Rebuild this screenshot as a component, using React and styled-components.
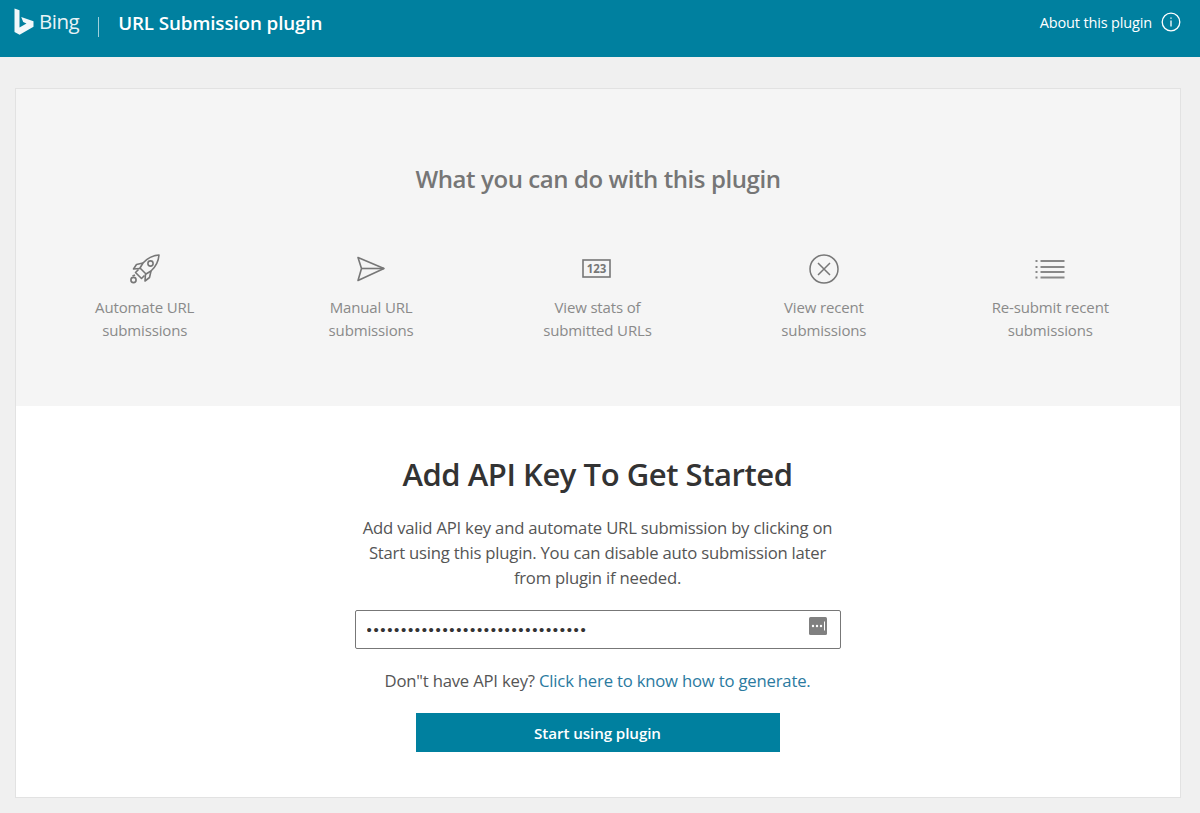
import styled, { createGlobalStyle } from 'styled-components'

const features = [
  { icon: <RocketIcon />, lines: ['Automate URL', 'submissions'] },
  { icon: <SendIcon />, lines: ['Manual URL', 'submissions'] },
  { icon: <StatsIcon />, lines: ['View stats of', 'submitted URLs'] },
  { icon: <CrossIcon />, lines: ['View recent', 'submissions'] },
  { icon: <ListIcon />, lines: ['Re-submit recent', 'submissions'] },
]

export default function App() {
  return (
    <Page>
      <GlobalStyle />
      <Header>
        <Brand>
          <BingLogo />
          <BingWord>Bing</BingWord>
          <Divider />
          <PluginTitle>URL Submission plugin</PluginTitle>
        </Brand>
        <About>
          About this plugin
          <InfoIcon />
        </About>
      </Header>
      <Card>
        <Intro>
          <IntroTitle>What you can do with this plugin</IntroTitle>
          <Features>
            {features.map(f => (
              <Feature key={f.lines[0]}>
                <IconSlot>{f.icon}</IconSlot>
                <FeatureText>
                  {f.lines[0]}
                  <br />
                  {f.lines[1]}
                </FeatureText>
              </Feature>
            ))}
          </Features>
        </Intro>
        <Setup>
          <SetupTitle>Add API Key To Get Started</SetupTitle>
          <SetupText>
            Add valid API key and automate URL submission by clicking on
            <br />
            Start using this plugin. You can disable auto submission later
            <br />
            from plugin if needed.
          </SetupText>
          <KeyField>
            <KeyInput type="password" defaultValue="12345678901234567890123456789012" />
            <KeyBadge>
              <svg width="20" height="18" viewBox="0 0 20 18">
                <rect x="1" y="0" width="18" height="18" rx="1.5" fill="#808080" />
                <circle cx="5" cy="9" r="1.2" fill="#fff" />
                <circle cx="9" cy="9" r="1.2" fill="#fff" />
                <circle cx="13" cy="9" r="1.2" fill="#fff" />
                <rect x="16" y="4.5" width="1" height="9" fill="#fff" />
              </svg>
            </KeyBadge>
          </KeyField>
          <Help>
            Don"t have API key? <HelpLink href="#">Click here to know how to generate.</HelpLink>
          </Help>
          <StartButton>Start using plugin</StartButton>
        </Setup>
      </Card>
    </Page>
  )
}

function BingLogo() {
  return (
    <svg width="20" height="28" viewBox="0 0 20 28">
      <path d="M0.5 0.5 L5.5 2.2 V19.5 L12.5 15.6 L9.2 14 L7.2 9 L19.5 13.3 V18.8 L5.6 26.8 L0.5 24 Z" fill="#f2f8fa" />
    </svg>
  )
}

function InfoIcon() {
  return (
    <svg width="20" height="20" viewBox="0 0 20 20" fill="none" stroke="#fff" strokeWidth="1.3">
      <circle cx="10" cy="10" r="8.8" />
      <path d="M10 8.5 V14.5" />
      <path d="M10 5.5 V6.8" />
    </svg>
  )
}

function RocketIcon() {
  return (
    <svg width="32" height="32" viewBox="0 0 32 32" fill="none" stroke="#777" strokeWidth="1.6" strokeLinejoin="round">
      <path d="M30 2 C 23 2.5 18 5.5 14 10 L 11 15 L 17 21 L 22 18 C 27 13.5 29.5 8.5 30 2 Z" />
      <circle cx="21.5" cy="10.5" r="2.6" />
      <path d="M14 10 L 7.5 11.5 L 4.5 16 L 11 15.5" />
      <path d="M22 18 L 20.5 24.5 L 16 28 L 16.5 21" />
      <path d="M9.5 16.5 L 6.5 19.5 L 12.5 25.5 L 15.5 22.5" />
      <circle cx="4.5" cy="27" r="2.6" />
      <path d="M6 22 L 3.5 23" />
    </svg>
  )
}

function SendIcon() {
  return (
    <svg width="30" height="28" viewBox="0 0 30 28" fill="none" stroke="#777" strokeWidth="1.6" strokeLinejoin="round">
      <path d="M2 2.5 L28 13.5 L2 25.5 L5.5 13.5 Z" />
      <path d="M5.5 13.5 H28" />
    </svg>
  )
}

function StatsIcon() {
  return (
    <svg width="30" height="22" viewBox="0 0 30 22">
      <rect x="1" y="2" width="27" height="17" fill="none" stroke="#777" strokeWidth="1.6" />
      <text x="14.5" y="15" textAnchor="middle" fontFamily="Open Sans, sans-serif" fontWeight="700" fontSize="11.5" fill="#777">123</text>
    </svg>
  )
}

function CrossIcon() {
  return (
    <svg width="30" height="30" viewBox="0 0 30 30" fill="none" stroke="#777" strokeWidth="1.5">
      <circle cx="15" cy="15" r="14" />
      <path d="M9 9 L21 21 M21 9 L9 21" />
    </svg>
  )
}

function ListIcon() {
  return (
    <svg width="30" height="22" viewBox="0 0 30 22" fill="#888">
      <rect x="5.5" y="2" width="24" height="2" />
      <rect x="5.5" y="8" width="24" height="2" />
      <rect x="5.5" y="13" width="24" height="2" />
      <rect x="5.5" y="18.500" width="24" height="2" />
      <rect x="0.500" y="2" width="2" height="2" />
      <rect x="0.500" y="8" width="2" height="2" />
      <rect x="0.500" y="13" width="2" height="2" />
      <rect x="0.500" y="18.500" width="2" height="2" />
    </svg>
  )
}

const GlobalStyle = createGlobalStyle`
  html, body {
    margin: 0;
    padding: 0;
    background: #f0f0f0;
  }
  * {
    box-sizing: border-box;
  }
`

const Page = styled.div`
  font-family: "Open Sans", "Noto Sans", sans-serif;
  height: 813px;
  overflow: hidden;
  background: #f0f0f0;
`

const Header = styled.header`
  height: 57px;
  background: #00809f;
  color: #fff;
  display: flex;
  justify-content: space-between;
  align-items: center;
  padding: 0 19px 13px 14px;
`

const Brand = styled.div`
  display: flex;
  align-items: center;
`

const BingWord = styled.span`
  font-size: 20.5px;
  letter-spacing: -0.5px;
  margin-left: 5px;
  color: #e8f3f6;
  position: relative;
  top: -1px;
`

const Divider = styled.span`
  width: 1px;
  height: 20px;
  background: #9fd0dc;
  margin: 9px 19px 0 19px;
`

const PluginTitle = styled.span`
  font-size: 18.8px;
  font-weight: 600;
  letter-spacing: -0.1px;
  position: relative;
  top: 1px;
`

const About = styled.div`
  display: flex;
  align-items: center;
  gap: 9px;
  font-size: 14.5px;
  letter-spacing: -0.15px;
`

const Card = styled.main`
  margin: 31px 19px 0 15px;
  height: 710px;
  border: 1px solid #e2e2e2;
  background: #fff;
  display: flex;
  flex-direction: column;
`

const Intro = styled.section`
  height: 317px;
  background: #f5f5f5;
  padding-top: 73px;
`

const IntroTitle = styled.h2`
  margin: 0;
  text-align: center;
  font-size: 24px;
  line-height: 33px;
  font-weight: 600;
  letter-spacing: -0.42px;
  color: #767676;
`

const Features = styled.div`
  display: grid;
  grid-template-columns: repeat(5, 226.400px);
  margin: 56px 0 0 15.500px;
`

const Feature = styled.div`
  display: flex;
  flex-direction: column;
  align-items: center;
`

const IconSlot = styled.div`
  height: 36px;
  display: flex;
  align-items: center;
  justify-content: center;
`

const FeatureText = styled.p`
  margin: 9px 0 0;
  text-align: center;
  font-size: 15px;
  line-height: 23px;
  letter-spacing: -0.15px;
  color: #8a8a8a;
`

const Setup = styled.section`
  flex: 1;
  display: flex;
  flex-direction: column;
  align-items: center;
  padding: 47px 0 0 0;
  margin-left: -1px;
`

const SetupTitle = styled.h1`
  margin: 0;
  font-size: 31px;
  line-height: 42px;
  font-weight: 600;
  letter-spacing: -0.45px;
  color: #333;
`

const SetupText = styled.p`
  margin: 20px 0 0;
  text-align: center;
  font-size: 16.7px;
  line-height: 25px;
  letter-spacing: -0.22px;
  color: #555;
`

const KeyField = styled.div`
  margin-top: 20px;
  width: 486px;
  height: 39px;
  border: 1px solid #777;
  border-radius: 2px;
  background: #fff;
  display: flex;
  align-items: center;
  padding: 0 11px;
`

const KeyInput = styled.input`
  flex: 1;
  border: 0;
  outline: 0;
  background: transparent;
  font-family: "Liberation Sans", sans-serif;
  font-size: 15px;
  letter-spacing: 1.65px;
  color: #333;
  padding: 0;
`

const KeyBadge = styled.span`
  display: flex;
  margin: -8px -1px 0 0;
  position: relative;
  left: -2px;
`

const Help = styled.p`
  margin: 20px 0 0;
  font-size: 16.7px;
  line-height: 24px;
  letter-spacing: -0.2px;
  color: #555;
`

const HelpLink = styled.a`
  color: #2b7a9f;
  text-decoration: none;
`

const StartButton = styled.button`
  margin-top: 20px;
  width: 364px;
  height: 39px;
  border: 0;
  background: #00809f;
  color: #fff;
  font-family: inherit;
  font-size: 15.200px;
  font-weight: 600;
  letter-spacing: -0.1px;
`
